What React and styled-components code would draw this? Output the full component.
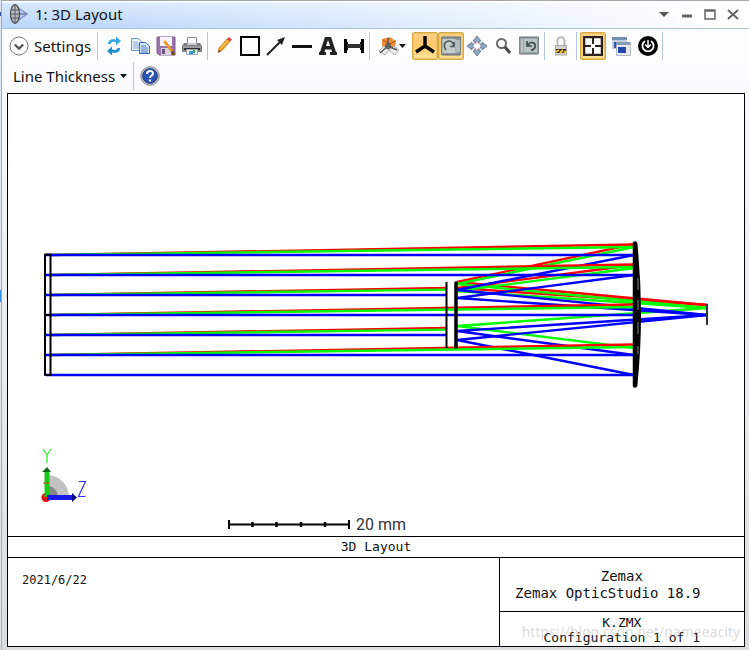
import React from "react";
import styled, { createGlobalStyle } from "styled-components";

const Global = createGlobalStyle`
  *, *::before, *::after { box-sizing: border-box; }
  body { margin: 0; background: #fff; color: #111; font-family: "Noto Sans", "Open Sans", sans-serif; }
`;

const Page = styled.div`
  display: flex;
  min-height: 100vh;
`;

const Edge = styled.div`
  width: 2px;
  flex: none;
  border-right: 1px solid #a5acb6;
  background: linear-gradient(#dfe6ef 12px, #35579c 12px 16px, #dfe6ef 16px 290px, #2f8fe0 290px 302px, #dfe4ea 302px);
`;

const Window = styled.main`
  flex: 1;
  min-width: 0;
  display: flex;
  flex-direction: column;
  background: linear-gradient(#fdfdfe 60px, #f6f8fa 110px, #d9dde2);
`;

const TitleBar = styled.header`
  display: flex;
  align-items: center;
  height: 29px;
  padding: 0 5px 2px 7px;
  gap: 6px;
  border-top: 1px solid #a3a6ab;
  border-bottom: 1px solid #a9c3da;
  background: linear-gradient(to right, rgba(255, 255, 255, 0) 10%, #fff 96%),
    linear-gradient(#fff 1px, #d8e8fd 2px, #bad7fb);
`;

const Title = styled.h1`
  flex: 1;
  margin: 0;
  font-size: 15px;
  line-height: 24px;
  font-weight: 400;
`;

const WindowControls = styled.div`
  display: flex;
`;

const ControlButton = styled.button`
  display: grid;
  place-items: center;
  width: 23px;
  height: 24px;
  padding: 0;
  border: 0;
  background: none;
`;

const Toolbar = styled.nav`
  display: flex;
  flex-direction: column;
  gap: 2px;
  padding: 3px 0 3px 7px;
`;

const ToolRow = styled.div`
  display: flex;
  align-items: center;
  height: 28px;
`;

const ToolButton = styled.button`
  display: flex;
  align-items: center;
  justify-content: center;
  flex: none;
  width: ${(p) => p.$width || 26}px;
  height: 28px;
  padding: 0;
  border: 1px solid ${(p) => (p.$active ? "#d6a83f" : "transparent")};
  border-radius: 2px;
  background: ${(p) => (p.$active ? "linear-gradient(#fbd08a, #ffc768 45%, #ffe49b)" : "none")};
  box-shadow: ${(p) => (p.$active ? "inset 0 0 0 1px #edc468" : "none")};
`;

const TextButton = styled.button`
  display: flex;
  align-items: center;
  flex: none;
  gap: 5px;
  width: ${(p) => p.$width}px;
  height: 28px;
  padding: 0 0 0 ${(p) => p.$inset || 0}px;
  border: 0;
  background: none;
  color: #111;
  font: 400 15px/24px "Noto Sans", "Open Sans", sans-serif;
  white-space: nowrap;
`;

const Separator = styled.span`
  flex: none;
  width: 1px;
  height: 28px;
  margin: 0 3px 0 2px;
  background: #b3c8e0;
`;

const Sheet = styled.section`
  position: relative;
  margin: 0 4px 3px 5px;
  border: 1px solid #000;
  background: #fff;
`;

const Drawing = styled.svg`
  display: block;
  width: 100%;
  height: auto;
`;

const mono = `"DejaVu Sans Mono", "Liberation Mono", monospace`;

const Caption = styled.h2`
  margin: 0;
  border-top: 1px solid #000;
  border-bottom: 1px solid #000;
  text-align: center;
  font: 400 13px/20px ${mono};
`;

const TitleBlock = styled.div`
  display: grid;
  grid-template-columns: 2fr 1fr;
  font: 400 13px/15px ${mono};
`;

const DateCell = styled.div`
  padding: 15px 14px;
  font-size: 12px;
`;

const InfoColumn = styled.div`
  border-left: 1px solid #000;
`;

const Product = styled.div`
  padding: 10px 0 9px;
  font-size: 14px;
  line-height: 17px;
  border-bottom: 1px solid #000;
  text-align: center;
  white-space: nowrap;
`;

const Release = styled.div`
  padding-right: 28px;
`;

const Configuration = styled.div`
  padding: 3px 0 1px;
  text-align: center;
  white-space: nowrap;
`;

const Watermark = styled.span`
  position: absolute;
  right: 4px;
  bottom: 3px;
  color: rgba(130, 130, 130, 0.3);
  font: 400 14px/22px "Noto Sans", sans-serif;
  pointer-events: none;
`;

const Icon = ({ size = 20, children }) => (
  <svg width={size} height={size} viewBox="0 0 20 20" fill="none" aria-hidden="true">
    {children}
  </svg>
);

const LensIcon = () => (
  <Icon>
    <path d="M8 3 18 10 8 17z" fill="#bccbf2" stroke="#8792d4" strokeWidth="1.500" />
    <ellipse cx="6" cy="10" rx="4.500" ry="9.300" fill="#b9bcc2" stroke="#424346" strokeWidth="1.200" />
    <path d="M6 1v18M2 6h8M2 14h8" stroke="#55585e" />
    <path d="M1 10h16" stroke="#55585e" />
  </Icon>
);

const Caret = () => (
  <svg width="7" height="4" viewBox="0 0 7 4" aria-hidden="true"><path d="M0 0h7L3.5 4z" fill="#111" /></svg>
);

const icons = {
  expand: (
    <><circle cx="10" cy="10" r="9" fill="#fff" stroke="#777" /><path d="m5.8 8.5 4.2 4 4.2-4" stroke="#555" strokeWidth="2.4" /></>
  ),
  refresh: (
    <>
      <path d="M4 8C4 3.500 8 2.500 12 3.500V.5L17 5l-5 4.500V6.500C9 5.500 7 6 6.500 8z" fill="#3ba9e6" />
      <path d="M16 12c0 4.500-4 5.500-8 4.500v3L3 15l5-4.500v3c3 1 5 .5 5.500-1.500z" fill="#218fd2" />
    </>
  ),
  copy: (
    <>
      <path d="M1.500 2.500h7l3 3v9h-10z" fill="#eef4fc" stroke="#6d94cc" />
      <path d="M3 6h5M3 8h6M3 10h6M3 12h6" stroke="#7fa6da" />
      <path d="M9.500 6.500h6l4 3.500v7.500h-10z" fill="#dbe8fa" stroke="#3564ae" />
      <path d="M11 10h5M11 12h7M11 14h7M11 16h7" stroke="#4a7cc6" />
    </>
  ),
  save: (
    <>
      <path d="M1 1h18v18H3l-2-2z" fill="#9a74ad" stroke="#7d5a93" />
      <path d="M4 1h12v9H4z" fill="#f6f2f8" /><path d="M5 12h10v7H5z" fill="#d7d2dc" /><path d="M6 13h3v5H6z" fill="#65507a" />
      <path d="m9 6 7 9 2 4" stroke="#7a461c" strokeWidth="2.500" /><path d="m8 5 8 10" stroke="#f5a32d" strokeWidth="2.500" />
    </>
  ),
  print: (
    <>
      <path d="M5.500 1.500h9V8h-9z" fill="#fafafa" stroke="#8b8e92" />
      <path d="M2 7h3v2h10V7h3l2 3v6H0v-6z" fill="#7c8083" /><path d="M1 11h18" stroke="#b4b7b9" /><path d="M2 13h16" stroke="#333" strokeWidth="2" />
      <path d="M4.500 13.500h11v5h-11z" fill="#e9f3fb" stroke="#96a1ab" /><path d="M7 15h4v3H7z" fill="#359bd6" /><path d="M11 14h2v3h-2z" fill="#3a9d54" />
    </>
  ),
  pencil: (
    <>
      <path d="m5 12 8-9 3 2.500-8 9L4 16z" fill="#f2a32d" stroke="#c67819" strokeWidth=".8" /><path d="m7 12 7-8" stroke="#ffd56a" />
      <path d="m13 3 2-2 3 2.500-2 2z" fill="#dc3f48" /><path d="m4 17 1-3 2 1.500z" fill="#555" />
    </>
  ),
  square: <path d="M1 1h18v18H1z" stroke="#000" strokeWidth="2" />,
  arrow: <><path d="M1 19 15 5" stroke="#222" strokeWidth="2" /><path d="m19 1-8 3 5 5z" fill="#222" /></>,
  line: <path d="M0 10.500h20" stroke="#111" strokeWidth="3" />,
  letter: <path fillRule="evenodd" d="M7 1h6l5 15h1v3h-7v-3h2l-.7-2.500H7.200L6.500 16H8v3H1v-3h1zm1 9h4.200L10 4z" fill="#222" />,
  measure: <><path d="M1.500 3v14M18.500 3v14" stroke="#000" strokeWidth="3" /><path d="M3 6v8M17 6v8" stroke="#000" strokeWidth="2" /><path d="M3 10h14" stroke="#333" strokeWidth="4" /></>,
  camera: (
    <>
      <path d="m3 3 8-2 6 4-1 6-9 2-4-3z" fill="#ef8f3d" /><path d="m4 4 6 4 7-3" stroke="#ab541a" />
      <path d="m0 15 5-5 5 4-4 5zM10 14l5-4 5 4-4 5z" fill="#f0f0f0" stroke="#aaa" />
      <circle cx="9" cy="10" r="2.500" fill="#808890" stroke="#444" /><path d="M9 2v8L1 17M9 10l9 4" stroke="#555" strokeWidth="1.500" />
    </>
  ),
  axes: <path d="M10 0v11M10 10 1 16M10 10l9 6" stroke="#050505" strokeWidth="3.400" />,
  rotate: (
    <>
      <rect x="0" y="1" width="20" height="18" rx="1.500" fill="#8b9699" stroke="#647176" /><path d="M1.500 3h13v14h-13z" fill="#c4cccd" />
      <path d="M5 14C1 8 5 5 8 5c3 0 5 2 4.500 6M9 10.500h4V6" stroke="#4d585b" strokeWidth="1.600" /><path d="M16 4v12M18 4v12" stroke="#dbe1e2" />
    </>
  ),
  pan: (
    <>
      <path d="m10 0 4 5h-2v2H8V5H6zM10 20l4-5h-2v-2H8v2H6zM0 10l5-4v2h2v4H5v2zM20 10l-5-4v2h-2v4h2v2z" fill="#8fa8c2" stroke="#58718b" strokeWidth=".8" />
      <path d="m10 6 4 4-4 4-4-4z" fill="#fff" /><path d="M7 7h2M11 7h2M7 13h2M11 13h2" stroke="#ca6c6c" />
    </>
  ),
  zoom: <><circle cx="8.500" cy="7.500" r="4.500" fill="#fff" stroke="#666" strokeWidth="2" /><path d="m12 11 5 6" stroke="#444" strokeWidth="3" /></>,
  undo: (
    <>
      <rect x="0" y="1" width="20" height="17" rx="1" fill="#98a2a5" stroke="#677276" /><path d="M5 3h13v13H5z" fill="#bcc5c6" /><path d="M3 3v13" stroke="#e5e9e9" />
      <path d="M9 9c2-4 8-3 7 2-.5 2-2 3-4 3M8 5v5h5" stroke="#404b4e" strokeWidth="1.700" />
    </>
  ),
  lock: (
    <>
      <path d="M6.500 10V5c0-5 7-5 7 0v5" stroke="#bababa" strokeWidth="2" /><rect x="4.500" y="9.500" width="11" height="9.500" fill="#d2d2d2" stroke="#aaa" />
      <path d="M5 13h10v4H5z" fill="#282620" /><path d="m5 16 3-2M9 17l3-3M13 17l2-2" stroke="#f1c536" strokeWidth="2" />
    </>
  ),
  target: (
    <><path d="M1 1h18v18H1z" fill="#fff" stroke="#29211d" strokeWidth="2.500" /><path d="M10 2v6M10 12v6M2 10h6M12 10h6" stroke="#29211d" strokeWidth="2" /></>
  ),
  windows: (
    <>
      <path d="M1 1h15v12H1z" fill="#c4cfdb" /><path d="M1 1h15v3H1z" fill="#718fb0" /><path d="M3 6h10v6H3z" fill="#3852ad" />
      <path d="M5.500 6.500h14v13h-14z" fill="#e7eaed" stroke="#b2b9c2" /><path d="M5 6h14v3H5z" fill="#839bb5" /><path d="M7 11h8v6H7z" fill="#2746ab" />
    </>
  ),
  clock: (
    <><circle cx="10" cy="10" r="10" fill="#000" /><path d="M7 5a5.600 5.600 0 1 0 6 0" stroke="#fff" strokeWidth="1.800" /><path d="M10 4v7M7 8.500l3 3 3-3" stroke="#fff" strokeWidth="1.500" /></>
  ),
  help: (
    <>
      <circle cx="10" cy="10" r="9.300" fill="#c1c5ca" stroke="#858b93" /><circle cx="10" cy="10" r="7.300" fill="#2a55b0" stroke="#183773" />
      <path d="M7 8c0-4 6-4 6-.5 0 2-3 2-3 4.500M10 13.500v2" stroke="#fff" strokeWidth="2" />
    </>
  ),
};

const Tool = ({ icon, label, active, width, menu }) => (
  <ToolButton type="button" aria-label={label} $active={active} $width={width}>
    <Icon>{icons[icon]}</Icon>
    {menu && <Caret />}
  </ToolButton>
);

const RED = "#ff0000";
const GREEN = "#00ff00";
const BLUE = "#0000ff";

const incoming = [255, 275, 295, 315, 335, 355, 375].map((y, i) => ({
  y,
  end: i === 2 || i === 4 ? 446 : 634,
  blueOnly: i === 6,
}));

const reflected = [
  [RED, 244, 282, 305], [RED, 265, 288, 305],
  [GREEN, 247, 284, 308], [GREEN, 268, 291, 308], [GREEN, 348, 326, 308],
  [BLUE, 255, 290, 315], [BLUE, 275, 298, 315], [BLUE, 355, 331, 315], [BLUE, 375, 340, 315],
];

const rise = (y, end, total) => y - (total * (end - 50)) / 584;

const Layout = () => (
  <Drawing viewBox="8 94 736 442" role="img" aria-label="3D layout of a two mirror telescope" fill="none">
    <g strokeWidth="2.400">
      {reflected.map(([color, primary, secondary, image], i) => (
        <path key={i} d={`M634 ${primary} 457 ${secondary} 707 ${image}`} stroke={color} />
      ))}
      {incoming.map(({ y, end, blueOnly }) => (
        <g key={y}>
          {!blueOnly && <path d={`M50 ${y}L${end} ${rise(y, end, 10.5)}`} stroke={RED} />}
          {!blueOnly && <path d={`M50 ${y}L${end} ${rise(y, end, 8)}`} stroke={GREEN} />}
          <path d={`M46 ${y}H${end}`} stroke={BLUE} />
        </g>
      ))}
    </g>
    <g stroke="#000">
      <path d="M45 254.500h5.500v120.500H45zM45 315h6" strokeWidth="2" strokeLinejoin="round" />
      <path d="M446.500 282v66" strokeWidth="2" />
      <path d="M456 283v64" strokeWidth="3.500" strokeLinecap="round" />
      <path d="M635 243.500v142" strokeWidth="4.500" strokeLinecap="round" />
      <path d="M636 243Q643.500 315 636 386" strokeWidth="2.500" fill="#000" />
      <path d="M638 278v12M638 300v10M638 322v12M638 346v8" stroke="#888" />
      <path d="M707 304v21" stroke="#333" strokeWidth="2" />
      <path d="M229 524.500h120" strokeWidth="2" />
      <path d="M229 520v9M349 520v9" strokeWidth="2" />
      <path d="M252.500 522v5M276.500 522v5M301 522v5M325 522v5" strokeWidth="2.500" />
    </g>
    <path d="M47 497V475a22 22 0 0 1 22 22z" fill="#c2c2c2" />
    <path d="M47 497V486a11 11 0 0 1 11 11z" fill="#858585" />
    <circle cx="46" cy="497.500" r="4.500" fill="#e01414" />
    <path d="M47 497V470" stroke="#18c818" strokeWidth="5" />
    <path d="m42 472 5-5 4 5z" fill="#0b6e14" />
    <path d="M43 483h6" stroke="#d63a12" />
    <path d="M47 497.500h26" stroke="#1818e8" strokeWidth="5" />
    <path d="m72 493 5 4.500-5 4.500z" fill="#08087c" />
    <path d="m43 449 4 6 4-6M47 455v8" stroke="#20f020" strokeWidth="1.200" />
    <path d="M78.500 481.500h7l-7 15h7" stroke="#3030ff" strokeWidth="1.200" />
    <text x="356" y="530" fill="#333" fontFamily="Roboto, sans-serif" fontSize="16">20 mm</text>
  </Drawing>
);

export default function App() {
  return (
    <>
      <Global />
      <Page>
        <Edge />
        <Window>
          <TitleBar>
            <LensIcon />
            <Title>1: 3D Layout</Title>
            <WindowControls>
              <ControlButton type="button" aria-label="Window menu"><Icon><path d="M5 8h10l-5 5z" fill="#555" /></Icon></ControlButton>
              <ControlButton type="button" aria-label="Minimize"><Icon><path d="M5 12h10" stroke="#666" strokeWidth="3" /></Icon></ControlButton>
              <ControlButton type="button" aria-label="Maximize"><Icon><path d="M5 6h10v9H5zM5 7h10" stroke="#666" strokeWidth="1.500" /></Icon></ControlButton>
              <ControlButton type="button" aria-label="Close"><Icon><path d="m5 6 10 9M15 6 5 15" stroke="#666" strokeWidth="2" /></Icon></ControlButton>
            </WindowControls>
          </TitleBar>
          <Toolbar aria-label="Layout tools">
            <ToolRow>
              <TextButton type="button" $width={86}><Icon>{icons.expand}</Icon>Settings</TextButton>
              <Separator />
              <Tool icon="refresh" label="Refresh" />
              <Tool icon="copy" label="Copy" />
              <Tool icon="save" label="Save" />
              <Tool icon="print" label="Print" />
              <Separator />
              <Tool icon="pencil" label="Annotate" />
              <Tool icon="square" label="Rectangle" />
              <Tool icon="arrow" label="Arrow" />
              <Tool icon="line" label="Line" />
              <Tool icon="letter" label="Text" />
              <Tool icon="measure" label="Measure" />
              <Separator />
              <Tool icon="camera" label="View orientation" width={39} menu />
              <Tool icon="axes" label="Axes" active />
              <Tool icon="rotate" label="Rotate" active />
              <Tool icon="pan" label="Pan" />
              <Tool icon="zoom" label="Zoom" />
              <Tool icon="undo" label="Reset view" />
              <Separator />
              <Tool icon="lock" label="Lock" />
              <Separator />
              <Tool icon="target" label="Fit to window" active />
              <Tool icon="windows" label="Clone window" width={30} />
              <Tool icon="clock" label="Active cursor" width={24} />
              <Separator />
            </ToolRow>
            <ToolRow>
              <TextButton type="button" $width={122} $inset={4}>Line Thickness<Caret /></TextButton>
              <Separator />
              <Tool icon="help" label="Help" />
            </ToolRow>
          </Toolbar>
          <Sheet>
            <Layout />
            <Caption>3D Layout</Caption>
            <TitleBlock>
              <DateCell>2021/6/22</DateCell>
              <InfoColumn>
                <Product>
                  Zemax
                  <Release>Zemax OpticStudio 18.9</Release>
                </Product>
                <Configuration>K.ZMX<br />Configuration 1 of 1</Configuration>
              </InfoColumn>
            </TitleBlock>
            <Watermark>https://blog.csdn.net/nameeacity</Watermark>
          </Sheet>
        </Window>
      </Page>
    </>
  );
}
